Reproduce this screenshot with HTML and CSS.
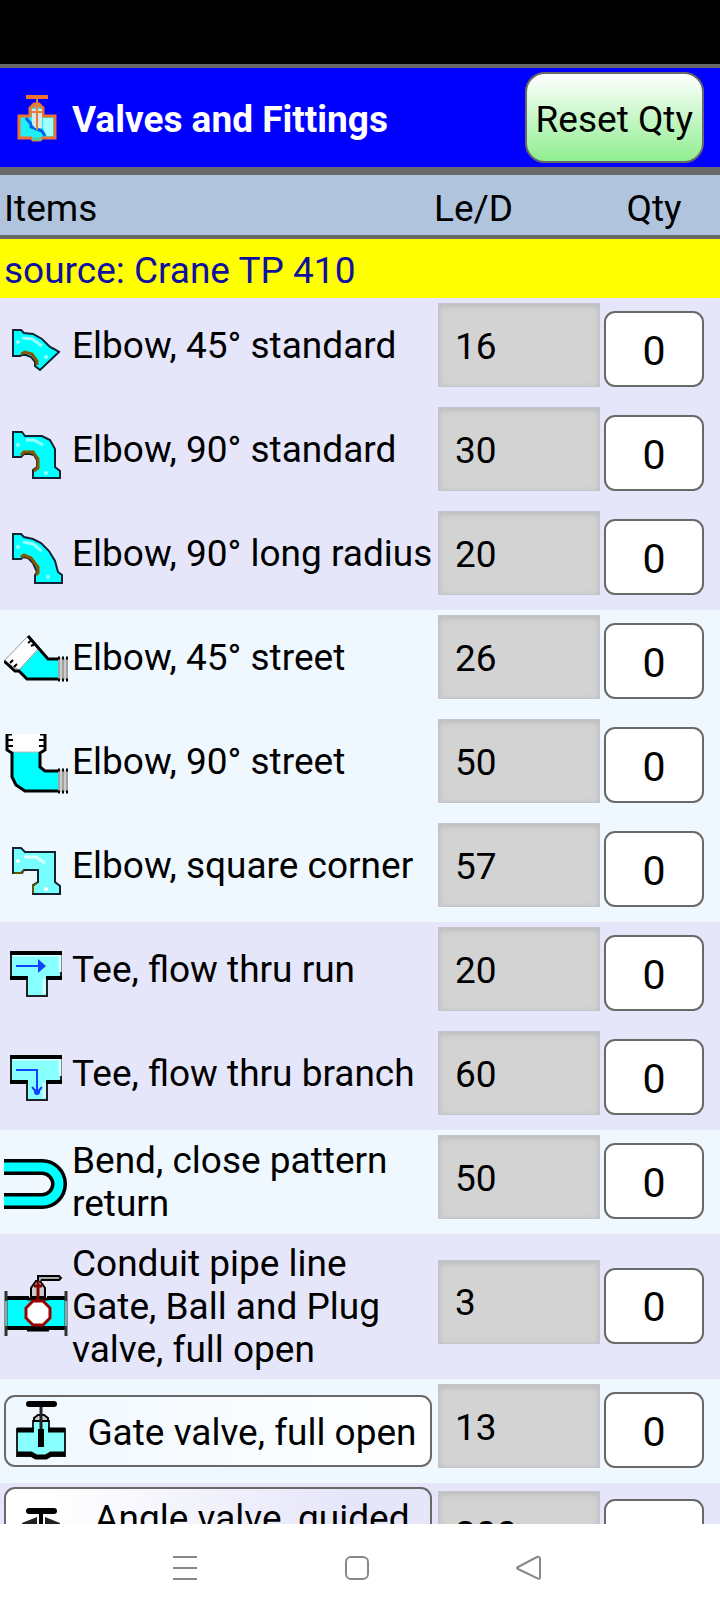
FILE: index.html
```html
<!DOCTYPE html>
<html lang="en">
<head>
<meta charset="utf-8">
<meta name="viewport" content="width=device-width, initial-scale=1">
<title>Valves and Fittings</title>
<link rel="stylesheet" href="styles.css">
</head>
<body>
<div class="status-bar"></div>
<header class="app-header">
  <svg class="logo" viewBox="0 0 40 48" aria-hidden="true">
    <path d="M2 22H13V14L17 10H22L26 14V22H38V44H25L23 46H16L14 44H2Z" fill="#1ef0f8" stroke="#f07030" stroke-width="3"/>
    <path d="M26 24H36V42H30L26 36Z" fill="#a0ffff"/>
    <path d="M9 24L14 30V33L25 37L28 42" fill="none" stroke="#0060f0" stroke-width="3"/>
    <path d="M15 15H25V34H18L15 30Z" fill="#d8e8e8"/>
    <path d="M9 3H31" stroke="#f07030" stroke-width="4"/>
    <path d="M20 4V36M14 18H25M16 14L20 10L24 14" fill="none" stroke="#e08040" stroke-width="2"/>
    <path d="M15 45H25" stroke="#5c9" stroke-width="3"/>
  </svg>
  <h1 class="title">Valves and Fittings</h1>
  <button class="reset" type="button">Reset Qty</button>
</header>
<main class="content">
<table class="fittings">
  <colgroup><col><col class="col-led"><col class="col-qty"></colgroup>
  <thead>
    <tr class="head"><th scope="col">Items</th><th scope="col" class="led-head">Le/D</th><th scope="col" class="qty-head">Qty</th></tr>
  </thead>
  <tbody>
    <tr class="source"><td colspan="3">source: Crane TP 410</td></tr>
    <tr class="row lavender">
      <td><div class="item"><svg class="icon" viewBox="0 0 64 64" aria-hidden="true">
        <path d="M9 12H17L20 15L29 16L38 21L46 29L50 31L55 34L36 52L31 48V44L27 39L22 37H18L16 38H9Z" fill="#0ff" stroke="#123" stroke-width="2"/>
        <path d="M17 36L21 34L28 36L33 43V47" fill="none" stroke="#850" stroke-width="3"/>
        <path d="M18 20L28 21L38 28" fill="none" stroke="#9ff" stroke-width="3"/><circle cx="14" cy="24" r="2" fill="#9ff"/><circle cx="42" cy="39" r="2" fill="#9ff"/>
      </svg><span class="name">Elbow, 45° standard</span></div></td>
      <td><input class="led" aria-label="Le/D, Elbow 45° standard" value="16" readonly></td>
      <td><button class="qty" type="button">0</button></td>
    </tr>
    <tr class="row lavender">
      <td><div class="item"><svg class="icon" viewBox="0 0 64 64" aria-hidden="true">
        <path d="M9 10H18L21 14H38L46 18L51 27V45L56 49V56H29V48L33 45V38L30 33L26 32H20L17 35H9Z" fill="#0ff" stroke="#123" stroke-width="2"/>
        <path d="M17 33L20 30H29L34 37V46L30 49" fill="none" stroke="#850" stroke-width="3"/>
        <path d="M22 18H30L39 23" fill="none" stroke="#9ff" stroke-width="3"/><circle cx="14" cy="23" r="2" fill="#9ff"/><circle cx="42" cy="51" r="2" fill="#9ff"/>
      </svg><span class="name">Elbow, 90° standard</span></div></td>
      <td><input class="led" aria-label="Le/D, Elbow 90° standard" value="30" readonly></td>
      <td><button class="qty" type="button">0</button></td>
    </tr>
    <tr class="row lavender">
      <td><div class="item"><svg class="icon" viewBox="0 0 64 64" aria-hidden="true">
        <path d="M9 8H17L20 11L29 13L37 17L45 25L51 35L54 46L58 49V57H31V49L33 46L29 37L24 32L19 31L17 33H9Z" fill="#0ff" stroke="#123" stroke-width="2"/>
        <path d="M17 31L20 29L27 32L34 41V47L32 49" fill="none" stroke="#850" stroke-width="3"/>
        <path d="M19 16L29 18L38 25" fill="none" stroke="#9ff" stroke-width="3"/><circle cx="14" cy="21" r="2" fill="#9ff"/><circle cx="44" cy="51" r="2" fill="#9ff"/>
      </svg><span class="name">Elbow, 90° long radius</span></div></td>
      <td><input class="led" aria-label="Le/D, Elbow 90° long radius" value="20" readonly></td>
      <td><button class="qty" type="button">0</button></td>
    </tr>
    <tr class="row alice">
      <td><div class="item"><svg class="icon" viewBox="0 0 64 64" aria-hidden="true">
        <path d="M34 20L44 29H54V50H22L15 40Z" fill="#0ff"/>
        <path d="M0 31L24 6L34 19L15 40Z" fill="#fff" stroke="#999"/>
        <path d="M24 6L44 29H54M0 31L11 41H15L23 49H54" fill="none" stroke="#000" stroke-width="3"/>
        <path d="M24 13L28 10M27 16L31 14M6 33L9 30M10 37L13 34" stroke="#000" stroke-width="2"/>
        <path d="M54 28H64V50H54Z" fill="#ccc"/><path d="M55 28V50M59 28V50M63 28V50" stroke="#777"/>
        <path d="M54 28H64M54 50H64" stroke="#000" stroke-width="3" stroke-dasharray="2"/>
      </svg><span class="name">Elbow, 45° street</span></div></td>
      <td><input class="led" aria-label="Le/D, Elbow 45° street" value="26" readonly></td>
      <td><button class="qty" type="button">0</button></td>
    </tr>
    <tr class="row alice">
      <td><div class="item"><svg class="icon" viewBox="0 0 64 64" aria-hidden="true">
        <path d="M8 18H36V33L41 37H54V57H21L12 51L8 43Z" fill="#0ff"/>
        <path d="M3 0H41V18H3Z" fill="#fff"/><path d="M8 18H36" stroke="#bbb"/>
        <path d="M8 0H3V16L8 19V43L12 51L21 57H54M36 0H41V16L36 19V33L41 37H54" fill="none" stroke="#000" stroke-width="3"/>
        <path d="M4 6H9M4 12H9M35 6H40M35 12H40" stroke="#000" stroke-width="2"/>
        <path d="M54 36H64V58H54Z" fill="#ccc"/><path d="M55 36V58M59 36V58M63 36V58" stroke="#777"/>
        <path d="M54 36H64M54 58H64" stroke="#000" stroke-width="3" stroke-dasharray="2"/>
      </svg><span class="name">Elbow, 90° street</span></div></td>
      <td><input class="led" aria-label="Le/D, Elbow 90° street" value="50" readonly></td>
      <td><button class="qty" type="button">0</button></td>
    </tr>
    <tr class="row alice">
      <td><div class="item"><svg class="icon" viewBox="0 0 64 64" aria-hidden="true">
        <path d="M9 10H17L21 14H51V44L56 48V56H29V47L34 44V32H20L18 35H9Z" fill="#7ff" stroke="#123" stroke-width="2"/>
        <path d="M10 35H17L20 32M29 55V48L33 45" fill="none" stroke="#650" stroke-width="2"/>
        <path d="M20 19H32L41 25" fill="none" stroke="#dff" stroke-width="3"/><circle cx="14" cy="23" r="2" fill="#fff"/><circle cx="42" cy="51" r="2" fill="#fff"/>
      </svg><span class="name">Elbow, square corner</span></div></td>
      <td><input class="led" aria-label="Le/D, Elbow square corner" value="57" readonly></td>
      <td><button class="qty" type="button">0</button></td>
    </tr>
    <tr class="row lavender">
      <td><div class="item"><svg class="icon" viewBox="0 0 64 64" aria-hidden="true">
        <path d="M7 10H57V36H43V54H23V36H7Z" fill="#8ff" stroke="#222" stroke-width="2"/>
        <path d="M9 13H56V30M40 37V52" fill="none" stroke="#d8ffff" stroke-width="3"/>
        <path d="M6 11H58M6 36H24M42 36H58" stroke="#000" stroke-width="4"/>
        <path d="M12 24H36" stroke="#14f" stroke-width="2"/><path d="M34 17L42 24L34 31Z" fill="#14f"/>
      </svg><span class="name">Tee, flow thru run</span></div></td>
      <td><input class="led" aria-label="Le/D, Tee flow thru run" value="20" readonly></td>
      <td><button class="qty" type="button">0</button></td>
    </tr>
    <tr class="row lavender">
      <td><div class="item"><svg class="icon" viewBox="0 0 64 64" aria-hidden="true">
        <path d="M7 10H57V36H43V54H23V36H7Z" fill="#8ff" stroke="#222" stroke-width="2"/>
        <path d="M9 13H56V30M40 37V52" fill="none" stroke="#d8ffff" stroke-width="3"/>
        <path d="M6 11H58M6 36H24M42 36H58" stroke="#000" stroke-width="4"/>
        <path d="M12 24H33V46M28 41L33 47L38 41" fill="none" stroke="#14f" stroke-width="2"/><circle cx="33" cy="46" r="3" fill="#14f"/>
      </svg><span class="name">Tee, flow thru branch</span></div></td>
      <td><input class="led" aria-label="Le/D, Tee flow thru branch" value="60" readonly></td>
      <td><button class="qty" type="button">0</button></td>
    </tr>
    <tr class="row alice">
      <td><div class="item"><svg class="icon" viewBox="0 0 64 64" aria-hidden="true">
        <path d="M0 17H38A17 17 0 0 1 38 51H0" fill="none" stroke="#000" stroke-width="16"/>
        <path d="M0 17H38A17 17 0 0 1 38 51H0" fill="none" stroke="#0ff" stroke-width="9"/>
      </svg><span class="name wrapped">Bend, close pattern return</span></div></td>
      <td><input class="led" aria-label="Le/D, Bend close pattern return" value="50" readonly></td>
      <td><button class="qty" type="button">0</button></td>
    </tr>
    <tr class="row lavender">
      <td><div class="item"><svg class="icon" viewBox="0 0 64 64" aria-hidden="true">
        <path d="M2 24H62V53H2Z" fill="#0ff"/>
        <path d="M27 22V13L32 6H36L41 13V22Z" fill="#ccc" stroke="#000" stroke-width="2"/>
        <path d="M3 23H25M43 23H61M3 53H61" stroke="#000" stroke-width="4"/>
        <path d="M23 24H45M23 55H45" stroke="#000" stroke-width="3"/>
        <path d="M2 16V61M62 16V61" stroke="#333" stroke-width="3"/>
        <path d="M2 26V51M62 26V51" stroke="#8aa" stroke-width="2"/>
        <path d="M34 7V1H55L57 3L55 5H37" fill="#aaa" stroke="#000" stroke-width="2"/>
        <path d="M34 6V26M30 11H38" stroke="#800000" stroke-width="3"/>
        <path d="M29 26H39L46 33V43L39 50H29L22 43V33Z" fill="#fff" stroke="#900" stroke-width="3"/>
      </svg><span class="name wrapped">Conduit pipe line Gate, Ball and Plug valve, full open</span></div></td>
      <td><input class="led" aria-label="Le/D, Conduit pipe line valve" value="3" readonly></td>
      <td><button class="qty" type="button">0</button></td>
    </tr>
    <tr class="row alice">
      <td><button class="choice to-white" type="button"><svg class="icon" viewBox="0 0 64 64" aria-hidden="true">
        <path d="M7 30H23V22H39V30H55V57H7Z" fill="#8ff" stroke="#222" stroke-width="2"/>
        <path d="M24 22V19L28 16H34L38 19V22Z" fill="#ccc" stroke="#000" stroke-width="2"/>
        <path d="M19 5H44" stroke="#000" stroke-width="6" stroke-linecap="round"/>
        <path d="M31 8V31" stroke="#222" stroke-width="3"/>
        <path d="M7 31H24M38 31H55M7 55H21L26 58H36L41 55H55" fill="none" stroke="#000" stroke-width="5"/>
        <path d="M28 30H34V48H28Z"/>
      </svg><span class="choice-name">Gate valve, full open</span></button></td>
      <td><input class="led" aria-label="Le/D, Gate valve full open" value="13" readonly></td>
      <td><button class="qty" type="button">0</button></td>
    </tr>
    <tr class="row lavender">
      <td><button class="choice from-white tall" type="button"><svg class="icon" viewBox="0 0 64 64" aria-hidden="true">
        <path d="M19 5H44" stroke="#000" stroke-width="6" stroke-linecap="round"/>
        <path d="M31 7V24" stroke="#000" stroke-width="4"/>
        <path d="M12 17L27 11V21H12ZM50 17L35 11V21H50Z" fill="#222"/>
        <path d="M12 21H50V60H28V44H12Z" fill="#8ff" stroke="#222" stroke-width="2"/>
      </svg><span class="choice-name">Angle valve, guided</span></button></td>
      <td><input class="led" aria-label="Le/D, Angle valve guided" value="200" readonly></td>
      <td><button class="qty" type="button">0</button></td>
    </tr>
  </tbody>
</table>
</main>
<nav class="system-nav" aria-label="System">
  <button type="button" aria-label="Recent apps"><svg class="nav-icon" viewBox="0 0 28 28"><path d="M2 3H26M2 14H26M2 25H26"/></svg></button>
  <button type="button" aria-label="Home"><svg class="nav-icon" viewBox="0 0 28 28"><rect x="3" y="3" width="22" height="22" rx="5"/></svg></button>
  <button type="button" aria-label="Back"><svg class="nav-icon" viewBox="0 0 28 28"><path d="M3 13L22 3Q25 2 25 5V23Q25 26 22 24L3 15Q1 14 3 13Z"/></svg></button>
</nav>
</body>
</html>
```
FILE: styles.css
```css
* { box-sizing: border-box; }

body {
  margin: 0;
  height: 100vh;
  display: flex;
  flex-direction: column;
  background: #fff;
  color: #000;
  font-family: Roboto, "Liberation Sans", sans-serif;
  font-size: 37px;
  line-height: 43px;
}

button, input {
  font: inherit;
  color: inherit;
}

.status-bar {
  flex: none;
  height: 64px;
  background: #000;
}

.app-header {
  flex: none;
  display: flex;
  align-items: center;
  padding: 4px 16px 4px 17px;
  border-top: 4px solid #696969;
  border-bottom: 8px solid #696969;
  background: #00f;
}

.logo {
  flex: none;
  width: 40px;
  height: 48px;
}

.title {
  flex: 1;
  margin: 0 0 0 15px;
  padding-top: 4px;
  color: #fff;
  font-size: 37px;
  font-weight: 700;
}

.reset {
  height: 91px;
  padding: 4px 9px 0;
  border: 2px solid #696969;
  border-radius: 20px;
  background: linear-gradient(#fff, #90ee90);
}

.content {
  flex: 1;
  min-height: 0;
  overflow-y: auto;
  scrollbar-width: none;
}

.fittings {
  width: 100%;
  border-collapse: collapse;
  table-layout: fixed;
}

.col-led { width: 166px; }
.col-qty { width: 120px; }

.fittings th,
.fittings td {
  padding: 0;
  text-align: left;
  font-weight: 400;
}

.head {
  height: 62px;
  background: #b0c4de;
  border-bottom: 4px solid #696969;
}

.fittings .head th { padding: 10px 0 4px 4px; }
.fittings .head .led-head { padding-left: 0; }

.fittings .head .qty-head {
  padding-left: 0;
  padding-right: 12px;
  text-align: center;
}

.source {
  height: 61px;
  background: #ff0;
  color: #1010a0;
}

.fittings .source td { padding: 4px 0 0 4px; }

.row { height: 104px; }
.row td { vertical-align: middle; }
.lavender { background: #e6e6fa; }
.alice { background: #f0f8ff; }

.item {
  display: flex;
  align-items: center;
  gap: 4px;
  padding: 8px 0 8px 4px;
}

.icon {
  flex: none;
  width: 64px;
  height: 64px;
}

.name {
  padding-bottom: 10px;
  white-space: nowrap;
}

.name.wrapped {
  padding: 0 16px 0 0;
  white-space: normal;
}

.led {
  display: block;
  width: 162px;
  height: 84px;
  margin: 0 0 10px 4px;
  padding: 2px 16px 0;
  border: 1px solid #c4c4d0;
  border-radius: 0;
  background: #d3d3d3;
  box-shadow: inset 0 2px 6px #b8b8b8;
}

.qty {
  display: block;
  width: 100px;
  height: 76px;
  margin: 0 0 2px 4px;
  padding: 4px 0 0;
  border: 2px solid #696969;
  border-radius: 11px;
  background: #fff;
  font-size: 41px;
}

.choice {
  display: flex;
  align-items: center;
  width: calc(100% - 6px);
  height: 72px;
  margin-left: 4px;
  padding: 0 0 0 4px;
  border: 2px solid #696969;
  border-radius: 11px;
}

.to-white { background: linear-gradient(to right, #f0f8ff, #fff); }
.from-white { background: linear-gradient(to right, #fff 10%, #e6e6fa 80%); }

.choice-name {
  flex: 1;
  padding-top: 2px;
  text-align: center;
}

.choice.tall {
  height: 102px;
  margin-top: 4px;
  margin-bottom: 4px;
}

.tall .choice-name {
  align-self: flex-start;
  padding-top: 8px;
}

.system-nav {
  flex: none;
  display: flex;
  justify-content: center;
  gap: 144px;
  height: 88px;
  padding-right: 6px;
  background: #fff;
}

.system-nav button {
  display: flex;
  align-items: center;
  padding: 0;
  border: 0;
  background: none;
}

.nav-icon {
  width: 28px;
  height: 28px;
  fill: none;
  stroke: #888;
  stroke-width: 2;
}
```
